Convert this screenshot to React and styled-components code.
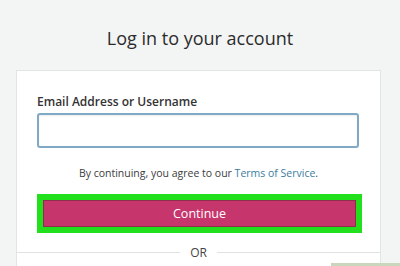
import React from 'react';
import styled, { createGlobalStyle } from 'styled-components';

const GlobalStyle = createGlobalStyle`
  html, body {
    margin: 0;
    padding: 0;
    background: #f3f5f5;
    font-family: "Open Sans", "Noto Sans", sans-serif;
    overflow: hidden;
  }
`;

const Page = styled.div`
  position: relative;
  width: 400px;
  height: 266px;
  overflow: hidden;
`;

const Title = styled.h1`
  margin: 26px 0 0;
  font-size: 18px;
  line-height: 24px;
  font-weight: 400;
  text-align: center;
  color: #2b2b2b;
`;

const Card = styled.div`
  margin: 20px 0 0 16px;
  width: 363px;
  height: 300px;
  background: #fff;
  border: 1px solid #e2e5e6;
`;

const Body = styled.div`
  padding: 23px 20px 0 20px;
`;

const Label = styled.label`
  display: block;
  font-size: 12px;
  line-height: 16px;
  font-weight: 600;
  color: #333;
`;

const Input = styled.div`
  margin-top: 3px;
  width: 322px;
  height: 35px;
  box-sizing: border-box;
  border: 2px solid #80a9c5;
  border-radius: 3px;
  box-shadow: inset 0 1px 2px rgba(0, 0, 0, 0.08);
`;

const Terms = styled.p`
  margin: 17px 0 0;
  font-size: 10.5px;
  line-height: 16px;
  text-align: center;
  color: #3c3c3c;
`;

const Link = styled.span`
  color: #3b7c9e;
`;

const Highlight = styled.div`
  margin-top: 13px;
  width: 325px;
  box-sizing: border-box;
  padding: 6px;
  background: #22e01c;
`;

const Button = styled.div`
  height: 27px;
  background: #c6356c;
  border: 1px solid #8d2e4a;
  box-sizing: border-box;
  color: #fff;
  font-size: 12.5px;
  display: flex;
  align-items: center;
  justify-content: center;
`;

const Divider = styled.div`
  margin-top: 13px;
  display: flex;
  align-items: center;
  gap: 10px;
  color: #444;
  font-size: 12px;
  line-height: 14px;

  &::before,
  &::after {
    content: '';
    flex: 1;
    height: 1px;
    margin-bottom: 2px;
    background: #dfe2e3;
  }
`;

const Watermark = styled.div`
  position: absolute;
  left: 331px;
  top: 263px;
  width: 80px;
  height: 10px;
  background: #c9d6bd;
`;

export default function App() {
  return (
    <Page>
      <GlobalStyle />
      <Title>Log in to your account</Title>
      <Card>
        <Body>
          <Label>Email Address or Username</Label>
          <Input />
          <Terms>
            By continuing, you agree to our <Link>Terms of Service</Link>.
          </Terms>
          <Highlight>
            <Button>Continue</Button>
          </Highlight>
        </Body>
        <Divider>OR</Divider>
      </Card>
      <Watermark />
    </Page>
  );
}
